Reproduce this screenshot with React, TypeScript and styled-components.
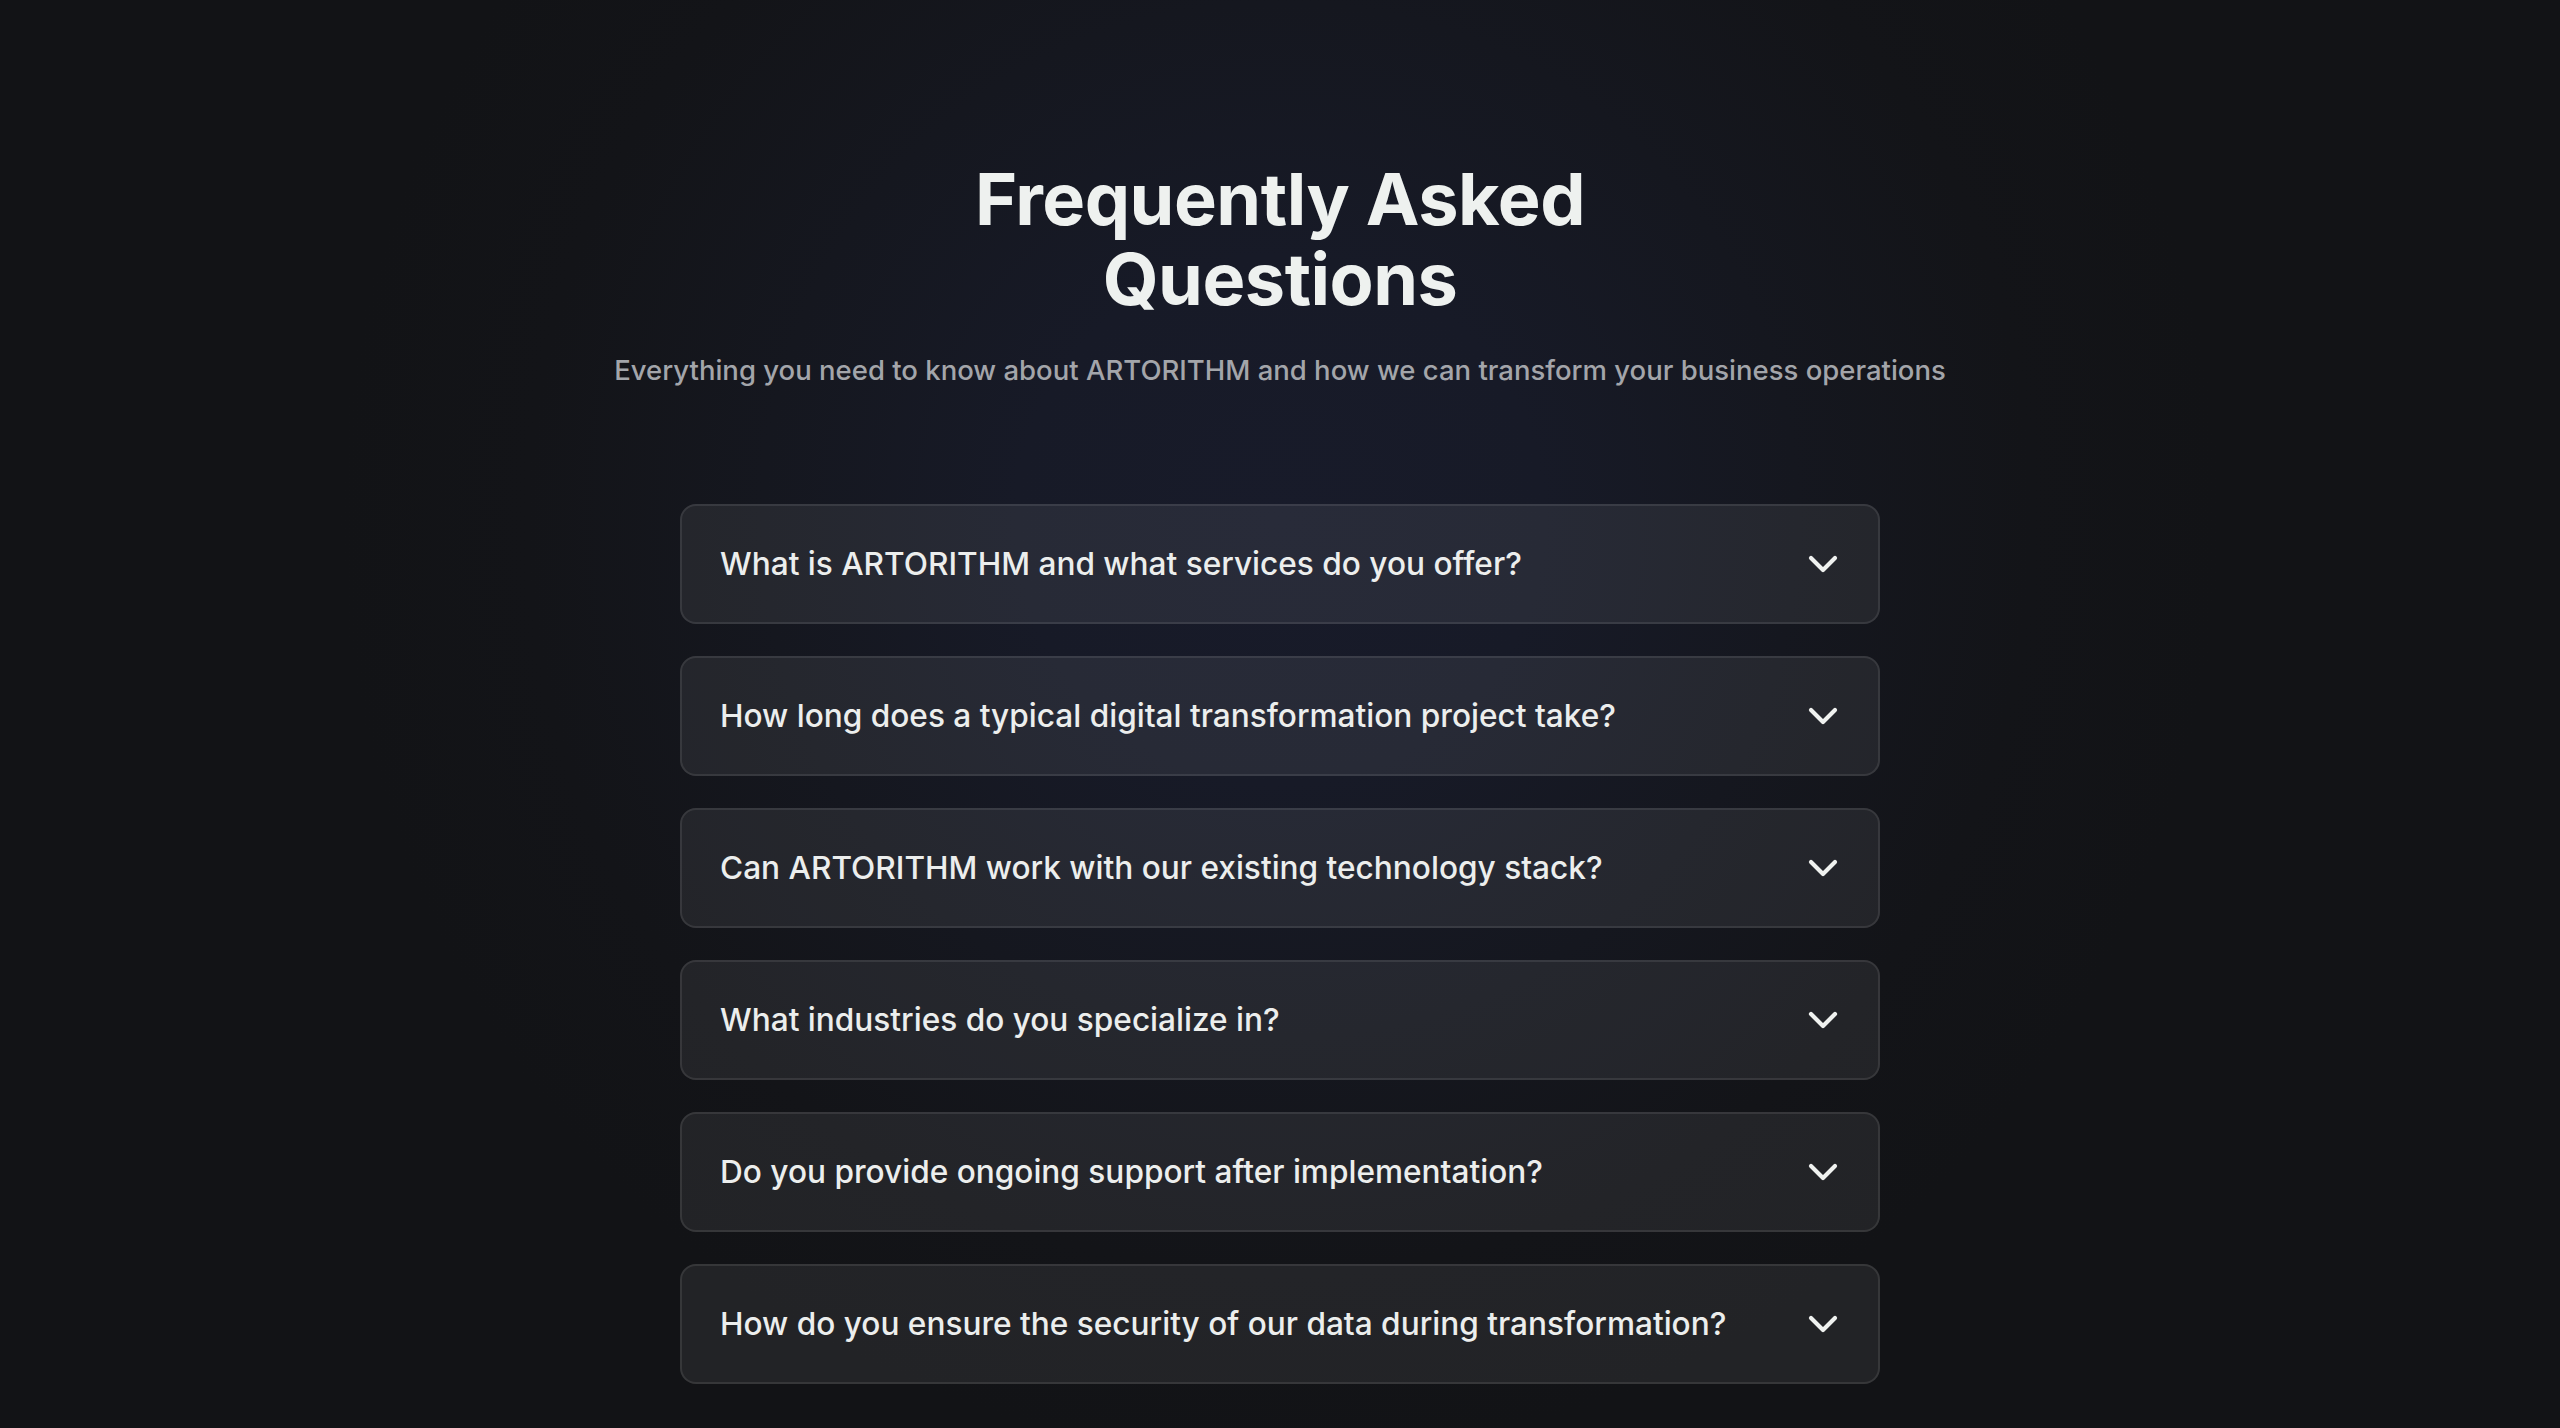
import React from "react";
import styled, { createGlobalStyle } from "styled-components";

const GlobalStyle = createGlobalStyle`
  html, body {
    margin: 0;
    padding: 0;
    background: #121316;
  }
  body {
    font-family: Inter, "Noto Sans", "Liberation Sans", sans-serif;
    -webkit-font-smoothing: antialiased;
  }
  * { box-sizing: border-box; }
`;

const Page = styled.main`
  min-height: 1428px;
  background:
    radial-gradient(circle 940px at 50% 520px,
      #181b2a 0%,
      #171a27 28%,
      #15171f 55%,
      #131418 80%,
      #121316 100%),
    #121316;
  display: flex;
  flex-direction: column;
  align-items: center;
  padding: 159px 0 40px;
`;

const Header = styled.header`
  display: flex;
  flex-direction: column;
  align-items: center;
  text-align: center;
`;

const Title = styled.h1`
  margin: 0;
  max-width: 700px;
  font-size: 72px;
  line-height: 80px;
  font-weight: 700;
  letter-spacing: -0.5px;
  color: #eef1ef;
`;

const Subtitle = styled.p`
  margin: 31px 0 0;
  font-size: 27.5px;
  line-height: 40px;
  font-weight: 500;
  color: #a3a5aa;
`;

const List = styled.section`
  margin-top: 114px;
  width: 1200px;
  display: flex;
  flex-direction: column;
  gap: 32px;
`;

const Item = styled.button`
  all: unset;
  box-sizing: border-box;
  width: 100%;
  height: 120px;
  display: flex;
  align-items: center;
  justify-content: space-between;
  padding: 0 31px 0 38px;
  border-radius: 16px;
  border: 2px solid rgba(255, 255, 255, 0.09);
  background: rgba(255, 255, 255, 0.072);
  cursor: pointer;
`;

const Question = styled.span`
  font-size: 31.6px;
  line-height: 40px;
  font-weight: 500;
  color: #eceeed;
`;

const Chevron = styled.svg`
  width: 48px;
  height: 48px;
  flex-shrink: 0;
  color: #f0f2f0;
`;

const questions = [
  "What is ARTORITHM and what services do you offer?",
  "How long does a typical digital transformation project take?",
  "Can ARTORITHM work with our existing technology stack?",
  "What industries do you specialize in?",
  "Do you provide ongoing support after implementation?",
  "How do you ensure the security of our data during transformation?",
];

export default function App() {
  return (
    <>
      <GlobalStyle />
      <Page>
        <Header>
          <Title>Frequently Asked Questions</Title>
          <Subtitle>
            Everything you need to know about ARTORITHM and how we can transform your business operations
          </Subtitle>
        </Header>
        <List>
          {questions.map((q) => (
            <Item key={q} type="button">
              <Question>{q}</Question>
              <Chevron viewBox="0 0 24 24" fill="none" stroke="currentColor" strokeWidth={2.1} strokeLinecap="round" strokeLinejoin="round">
                <path d="m6 9 6 6 6-6" />
              </Chevron>
            </Item>
          ))}
        </List>
      </Page>
    </>
  );
}
